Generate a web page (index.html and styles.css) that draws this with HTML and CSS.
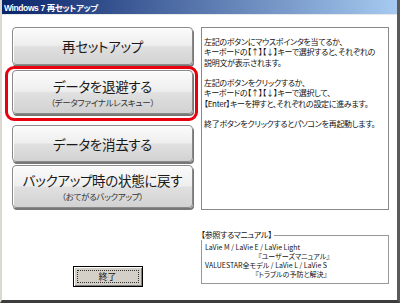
FILE: index.html
```html
<!DOCTYPE html>
<html lang="ja">
<head>
<meta charset="utf-8">
<title>Windows 7 再セットアップ</title>
<link rel="stylesheet" href="styles.css">
</head>
<body>
<div class="window">
  <div class="titlebar"><span class="title">Windows 7 再セットアップ</span></div>
  <div class="body">
    <div class="left">
      <div class="mbtn b1"><span class="main">再セットアップ</span></div>
      <div class="highlight">
        <div class="mbtn b2"><span class="main">データを退避する</span><span class="sub">（データファイナルレスキュー）</span></div>
      </div>
      <div class="mbtn b3"><span class="main">データを消去する</span></div>
      <div class="mbtn b4"><span class="main">バックアップ時の状態に戻す</span><span class="sub">（おてがるバックアップ）</span></div>
      <div class="exit-row"><div class="exit"><span class="focus">終了</span></div></div>
    </div>
    <div class="right">
      <div class="desc">
        <p>左記のボタンにマウスポインタを当てるか、<br>キーボードの【↑】【↓】キーで選択すると、それぞれの<br>説明文が表示されます。</p>
        <p>左記のボタンをクリックするか、<br>キーボードの【↑】【↓】キーで選択して、<br>【Enter】キーを押すと、それぞれの設定に進みます。</p>
        <p>終了ボタンをクリックするとパソコンを再起動します。</p>
      </div>
      <div class="manual">
        <div class="legend">【参照するマニュアル】</div>
        <div class="manual-box">
          <div class="mline">LaVie M / LaVie E / LaVie Light</div>
          <div class="mline indent1">『ユーザーズマニュアル』</div>
          <div class="mline">VALUESTAR全モデル / LaVie L / LaVie S</div>
          <div class="mline indent2">『トラブルの予防と解決』</div>
        </div>
      </div>
    </div>
  </div>
</div>
</body>
</html>
```
FILE: styles.css
```css
* { box-sizing: border-box; }
html, body { margin: 0; padding: 0; background: #fff; }
body {
  font-family: "Noto Sans CJK JP", "Liberation Sans", sans-serif;
  font-feature-settings: "palt";
}
.window {
  width: 400px;
  height: 303px;
  display: flex;
  flex-direction: column;
  background: #fff;
  border-left: 2px solid #dcd9d1;
  border-right: 3px solid #5a5a5a;
  border-bottom: 3px solid #3c3c3c;
}
.titlebar {
  height: 15px;
  background: linear-gradient(to right, #0a246a, #a6caf0);
  color: #fff;
  display: flex;
  align-items: center;
  padding-left: 2px;
  border-bottom: 1px solid #e8e8e8;
}
.title {
  font-family: "Liberation Sans", "Noto Sans CJK JP", sans-serif;
  font-weight: bold;
  font-size: 8.5px;
  letter-spacing: -0.4px;
}
.body {
  flex: 1;
  display: flex;
  padding-top: 12px;
}
.left {
  width: 193px;
  margin-left: 3px;
  display: flex;
  flex-direction: column;
}
.mbtn {
  margin: 0 5px 0 7px;
  border: 1px solid #8a8a8a;
  border-radius: 4px;
  background: linear-gradient(#fbfbfb, #eeeeee 48%, #e0e0e0 52%, #d2d2d2);
  box-shadow: inset 1px 1px 0 #ffffff, 1px 2px 0 #777;
  display: flex;
  flex-direction: column;
  align-items: center;
  justify-content: center;
  gap: 3px;
  color: #1a1a1a;
}
.main { font-size: 13.5px; line-height: 16px; letter-spacing: -0.3px; }
.sub { font-size: 8.5px; line-height: 10px; color: #333; letter-spacing: -0.3px; }
.b1 { height: 38px; }
.highlight {
  margin-top: 1px;
  border: 3px solid #e8000f;
  border-radius: 9px;
  padding: 1px 2px 4px 4px;
}
.highlight .mbtn { margin: 0; }
.b2 { height: 44px; padding-top: 1px; }
.b3 { height: 37px; margin-top: 4px; }
.b4 { height: 43px; margin-top: 3px; }
.exit-row {
  margin-top: auto;
  margin-bottom: 13px;
  display: flex;
  justify-content: center;
  padding-left: 12px;
}
.exit {
  width: 70px;
  height: 21px;
  background: #d4d0c8;
  border: 1px solid #000;
  box-shadow: inset 1px 1px 0 #fff, inset -1px -1px 0 #808080;
  padding: 3px;
  display: flex;
}
.focus {
  flex: 1;
  border: 1px dotted #333;
  font-size: 9px;
  line-height: 11px;
  text-align: center;
  color: #111;
}
.right {
  width: 188px;
  margin-left: 3px;
  display: flex;
  flex-direction: column;
}
.desc {
  height: 183px;
  border: 1px solid #888;
  padding: 9px 1px 0 2px;
  font-size: 8px;
  line-height: 10.3px;
  color: #111;
  letter-spacing: -0.3px;
  white-space: nowrap;
}
.desc p { margin: 0 0 10.3px; }
.manual {
  margin-top: 25px;
  position: relative;
}
.legend {
  font-size: 8px;
  line-height: 10px;
  letter-spacing: -0.3px;
  color: #111;
  background: #fff;
  position: absolute;
  left: 0;
  top: -5px;
  padding-right: 2px;
}
.manual-box {
  height: 49px;
  border: 1px solid #999;
  padding: 7px 0 0 3px;
  color: #111;
  white-space: nowrap;
}
.mline {
  font-size: 7px;
  line-height: 9px;
  height: 9px;
}
.indent1 { padding-left: 53px; }
.indent2 { padding-left: 50px; }
```
